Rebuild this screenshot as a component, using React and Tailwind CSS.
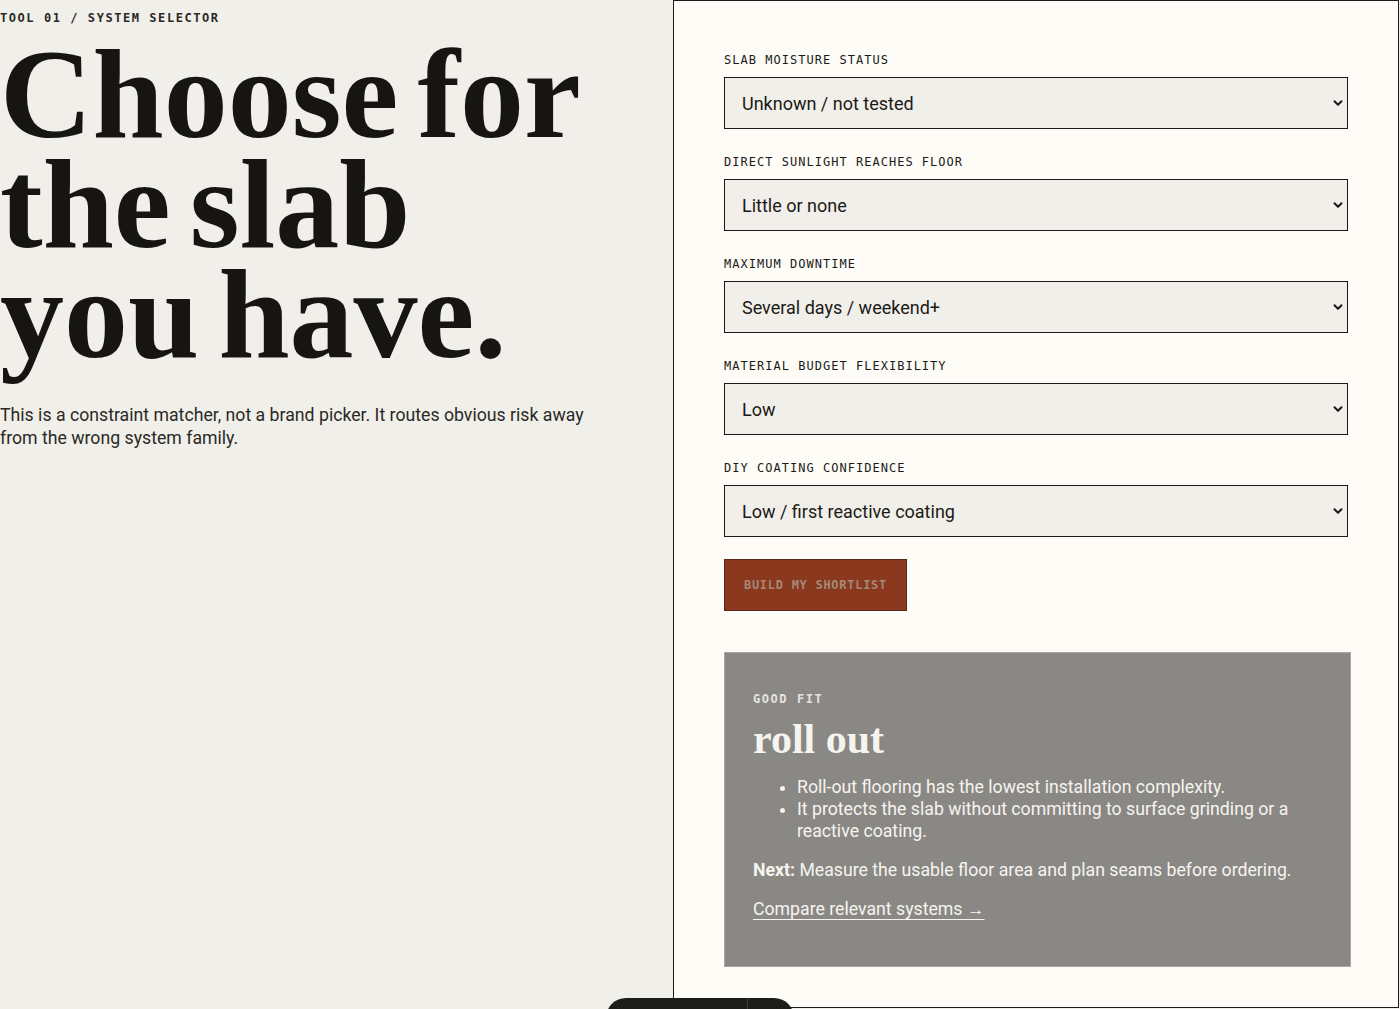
import React from "react";
import { ChevronDown } from "lucide-react";

const FIELDS = [
  { label: "Slab moisture status", value: "Unknown / not tested" },
  { label: "Direct sunlight reaches floor", value: "Little or none" },
  { label: "Maximum downtime", value: "Several days / weekend+" },
  { label: "Material budget flexibility", value: "Low" },
  { label: "DIY coating confidence", value: "Low / first reactive coating" },
];

const mono = "font-['DejaVu_Sans_Mono','Liberation_Mono',monospace]";
const sans = "font-['Roboto','Noto_Sans',sans-serif]";
const serif = "font-['Liberation_Serif','DejaVu_Serif',serif]";

function Field({ label, value }) {
  return (
    <label className="flex flex-col gap-[9px]">
      <span className={`${mono} text-[12px] leading-4 uppercase tracking-[0.085em] text-[#1b1a16]`}>
        {label}
      </span>
      <div className="relative">
        <select
          defaultValue={value}
          className={`${sans} w-full h-[52px] appearance-none border border-[#1b1a16] bg-[#f1efe9] pl-[17px] pr-10 text-[18px] text-[#1b1a16] outline-none`}
        >
          <option>{value}</option>
        </select>
        <ChevronDown
          size={14}
          strokeWidth={3.4}
          className="pointer-events-none absolute right-[3px] top-1/2 -translate-y-1/2 text-[#1b1a16]"
        />
      </div>
    </label>
  );
}

export default function App() {
  return (
    <div className="relative h-[1009px] overflow-hidden bg-[#f1efe9] text-[#1b1a16]">
      <div className="grid h-full grid-cols-[673px_726px]">
        {/* Intro */}
        <div className="pt-[10px]">
          <p className={`${mono} text-[12px] leading-4 uppercase tracking-[0.13em] font-bold text-[#2a2925]`}>
            Tool 01 / System selector
          </p>
          <h1
            className={`${serif} mt-[13px] text-[128px] leading-[110px] font-bold [word-spacing:-0.1em] text-[#161512]`}
          >
            Choose for
            <br />
            the slab
            <br />
            you have.
          </h1>
          <p className={`${sans} mt-[35px] max-w-[610px] text-[17.7px] leading-[23px] text-[#2a2925]`}>
            This is a constraint matcher, not a brand picker. It routes obvious risk away from the wrong
            system family.
          </p>
        </div>

        {/* Selector panel */}
        <div className="h-[1008px] border border-[#1b1a16] bg-[#fdfcf7] px-[50px] pt-[51px]">
          <div className="flex flex-col gap-[25px]">
            {FIELDS.map((f) => (
              <Field key={f.label} {...f} />
            ))}
          </div>

          <button
            className={`${mono} mt-[22px] h-[52px] w-[183px] border border-[#5a2814] bg-[#8a381e] text-[12px] uppercase tracking-[0.06em] font-bold text-[#a58878]`}
          >
            Build my shortlist
          </button>

          <div className="mt-[41px] h-[315px] w-[627px] border border-[#a9a7a2] bg-[#8a8884] px-[28px] pt-[38px] text-[#f6f4ef]">
            <p className={`${mono} text-[12px] leading-4 uppercase tracking-[0.13em] font-bold text-[#e6e4df]`}>
              Good fit
            </p>
            <h2 className={`${serif} mt-[10px] text-[42px] leading-[44px] font-bold`}>roll out</h2>
            <ul className={`${sans} mt-[15px] list-disc pl-[44px] text-[17.7px] leading-[22px]`}>
              <li>Roll-out flooring has the lowest installation complexity.</li>
              <li>It protects the slab without committing to surface grinding or a reactive coating.</li>
            </ul>
            <p className={`${sans} mt-[17px] text-[17.7px] leading-[22px]`}>
              <strong>Next:</strong> Measure the usable floor area and plan seams before ordering.
            </p>
            <a
              href="#"
              className={`${sans} mt-[17px] inline-block text-[17.7px] leading-[22px] underline underline-offset-4`}
            >
              Compare relevant systems <span className="font-bold">→</span>
            </a>
          </div>
        </div>
      </div>

      {/* Floating toolbar, cut off at the bottom */}
      <div className="absolute left-[606px] top-[998px] flex h-[40px] w-[188px] rounded-[20px] bg-[#1c1c1b]">
        <div className="w-[142px] border-r border-[#3a3a38]" />
      </div>
    </div>
  );
}
